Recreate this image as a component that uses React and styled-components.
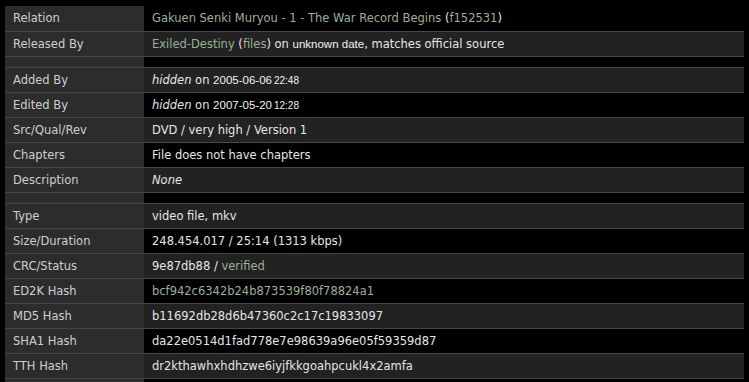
import React from "react";
import styled, { createGlobalStyle } from "styled-components";

const GlobalStyle = createGlobalStyle`
  html, body { margin: 0; padding: 0; background: #000; }
  body { font-family: "DejaVu Sans", Verdana, sans-serif; }
`;

const Page = styled.div`
  padding: 6px 5px 0 5px;
  background: #000;
  height: 382px;
  overflow: hidden;
  box-sizing: border-box;
`;

const Table = styled.table`
  width: 739px;
  border-collapse: collapse;
  table-layout: fixed;
  font-size: 11.5px;
`;

const Row = styled.tr`
  height: ${(p) => (p.$spacer ? "11px" : "25px")};
  border-bottom: 1px solid #474747;
`;

const Label = styled.th`
  box-sizing: border-box;
  width: 139px;
  padding: 0 8px;
  text-align: left;
  font-weight: normal;
  color: #cfcfcf;
  background: #2c2c2c;
  white-space: nowrap;
`;

const Value = styled.td`
  padding: 0 8px;
  color: #e6e6e6;
  background: ${(p) => (p.$shade ? "#222222" : "#000000")};
  white-space: nowrap;
`;

const Link = styled.span`
  color: #9ab09a;
`;

const Em = styled.i`
  color: #e6e6e6;
`;

const Narrow = styled.span`
  font-family: "Liberation Sans", Arial, sans-serif;
  font-size: 11.5px;
  color: #f2f2f2;
`;

const Time = styled.span`
  font-family: "Liberation Sans", Arial, sans-serif;
  font-size: 10px;
  margin-left: 2px;
  color: #f2f2f2;
`;

const rows = [
  {
    label: "Relation",
    value: (
      <>
        <Link>Gakuen Senki Muryou - 1 - The War Record Begins</Link> (
        <Link>f152531</Link>)
      </>
    ),
  },
  {
    label: "Released By",
    value: (
      <>
        <Link>Exiled-Destiny</Link> (<Link>files</Link>) on{" "}
        <Narrow>unknown date</Narrow>, matches official source
      </>
    ),
  },
  { spacer: true },
  {
    label: "Added By",
    value: (
      <>
        <Em>hidden</Em> on <Narrow>2005-06-06</Narrow>
        <Time>22:48</Time>
      </>
    ),
  },
  {
    label: "Edited By",
    value: (
      <>
        <Em>hidden</Em> on <Narrow>2007-05-20</Narrow>
        <Time>12:28</Time>
      </>
    ),
  },
  { label: "Src/Qual/Rev", value: "DVD / very high / Version 1" },
  { label: "Chapters", value: "File does not have chapters" },
  { label: "Description", value: <Em>None</Em> },
  { spacer: true },
  { label: "Type", value: "video file, mkv" },
  { label: "Size/Duration", value: "248.454.017 / 25:14 (1313 kbps)" },
  {
    label: "CRC/Status",
    value: (
      <>
        9e87db88 / <Link>verified</Link>
      </>
    ),
  },
  { label: "ED2K Hash", value: <Link>bcf942c6342b24b873539f80f78824a1</Link> },
  { label: "MD5 Hash", value: "b11692db28d6b47360c2c17c19833097" },
  { label: "SHA1 Hash", value: "da22e0514d1fad778e7e98639a96e05f59359d87" },
  { label: "TTH Hash", value: "dr2kthawhxhdhzwe6iyjfkkgoahpcukl4x2amfa" },
  { label: "", value: "" },
];

export default function App() {
  return (
    <>
      <GlobalStyle />
      <Page>
        <Table>
          <tbody>
            {rows.map((r, i) => (
              <Row key={i} $spacer={r.spacer}>
                <Label>{r.label || ""}</Label>
                <Value $shade={i % 2 === 1}>{r.value || ""}</Value>
              </Row>
            ))}
          </tbody>
        </Table>
      </Page>
    </>
  );
}
